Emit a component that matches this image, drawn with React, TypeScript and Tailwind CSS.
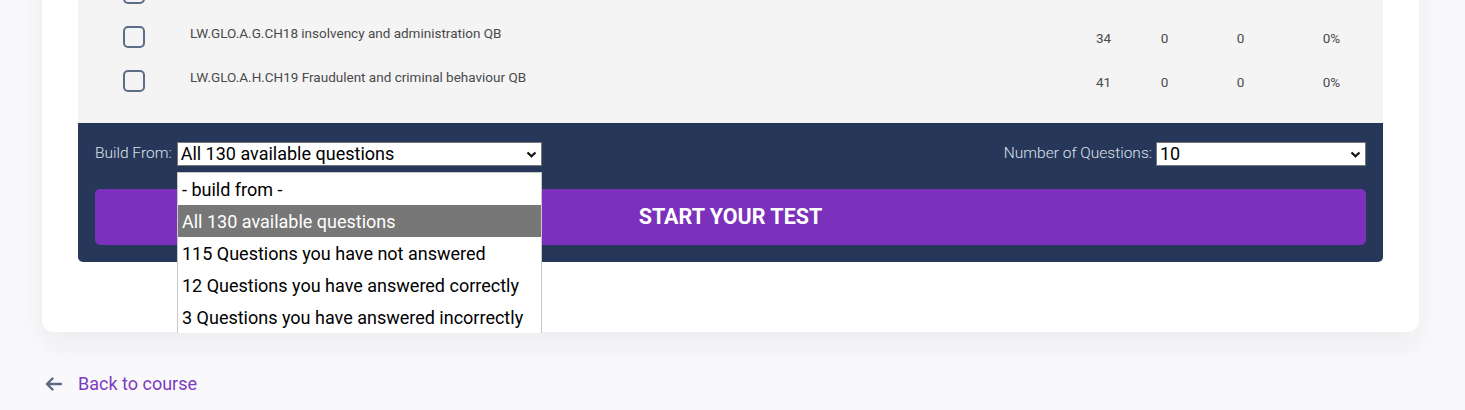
type Row = { title: string; total: string; a: string; b: string; pct: string };

const rows: Row[] = [
  { title: "", total: "", a: "", b: "", pct: "" },
  { title: "LW.GLO.A.G.CH18 insolvency and administration QB", total: "34", a: "0", b: "0", pct: "0%" },
  { title: "LW.GLO.A.H.CH19 Fraudulent and criminal behaviour QB", total: "41", a: "0", b: "0", pct: "0%" },
];

const options = [
  "- build from -",
  "All 130 available questions",
  "115 Questions you have not answered",
  "12 Questions you have answered correctly",
  "3 Questions you have answered incorrectly",
];

const Chevron = () => (
  <svg width="11" height="7" viewBox="0 0 11 7" className="shrink-0">
    <path d="M1.5 1.5 L5.5 5.2 L9.5 1.5" fill="none" stroke="#111" strokeWidth="2.2" />
  </svg>
);

const BackArrow = () => (
  <svg width="17" height="14" viewBox="0 0 17 14" className="shrink-0">
    <path d="M16 7 H2 M7.5 1.5 L2 7 L7.5 12.5" fill="none" stroke="#5c6a85" strokeWidth="2.4" strokeLinecap="round" strokeLinejoin="round" />
  </svg>
);

const FakeSelect = ({ value, width }: { value: string; width: string }) => (
  <div className={`${width} h-[24px] bg-white border border-[#767676] flex items-center justify-between pl-[3px] pr-[4px] text-[18px] text-black leading-none`}>
    <span>{value}</span>
    <Chevron />
  </div>
);

export default function App() {
  return (
    <div className="w-[1465px] h-[410px] overflow-hidden bg-[#f9f9fb] font-['Roboto',sans-serif]">
      <div className="ml-[42px] w-[1377px] -mt-[49px] bg-white rounded-b-[12px] shadow-[0_12px_28px_rgba(30,30,60,0.06)] px-[36px] pb-[70px]">
        <div className="bg-[#f4f4f4] pt-[20px] pb-[20px]">
          {rows.map((r, i) => (
            <div key={i} className="grid grid-cols-[112px_1fr_61px_61px_91px_91px] pr-[6px] h-[44px] items-center text-[13.5px] text-[#4a4a4a]">
              <div className="flex justify-center">
                <div className="w-[22px] h-[22px] rounded-[5px] border-2 border-[#5d6d88] bg-[#f4f4f4]" />
              </div>
              <div className="mb-[7px]">{r.title}</div>
              <div className="text-center mt-[2px]">{r.total}</div>
              <div className="text-center mt-[2px]">{r.a}</div>
              <div className="text-center mt-[2px]">{r.b}</div>
              <div className="text-center mt-[2px]">{r.pct}</div>
            </div>
          ))}
        </div>
        <div className="relative bg-[#263759] rounded-b-[5px] px-[17px] pt-[19px] pb-[17px]">
          <div className="flex items-center justify-between">
            <div className="flex items-center gap-[5px]">
              <span className="text-[15.5px] font-light text-[#dfe3ea]">Build From:</span>
              <FakeSelect value="All 130 available questions" width="w-[365px]" />
            </div>
            <div className="flex items-center gap-[4px]">
              <span className="text-[15.5px] font-light text-[#dfe3ea]">Number of Questions:</span>
              <FakeSelect value="10" width="w-[210px]" />
            </div>
          </div>
          <button className="mt-[23px] w-full h-[56px] rounded-[5px] bg-[#7b31bc] text-white font-bold text-[21.5px]">
            START YOUR TEST
          </button>
          <div className="absolute left-[99px] top-[49px] w-[365px] bg-white border-x border-t border-[#c9c9c9] text-[18px] text-black">
            {options.map((o, i) => (
              <div key={o} className={`h-[32px] flex items-center pl-[4px] ${i === 1 ? "bg-[#777777] text-white" : ""}`}>
                {o}
              </div>
            ))}
          </div>
        </div>
      </div>
      <div className="ml-[42px] w-[1377px] mt-[18px] border-t border-[#f0f0f4]" />
      <a href="#" className="ml-[45px] mt-[19px] flex items-center gap-[16px] text-[18px] text-[#7d3cc0] w-fit">
        <BackArrow />
        <span>Back to course</span>
      </a>
    </div>
  );
}
